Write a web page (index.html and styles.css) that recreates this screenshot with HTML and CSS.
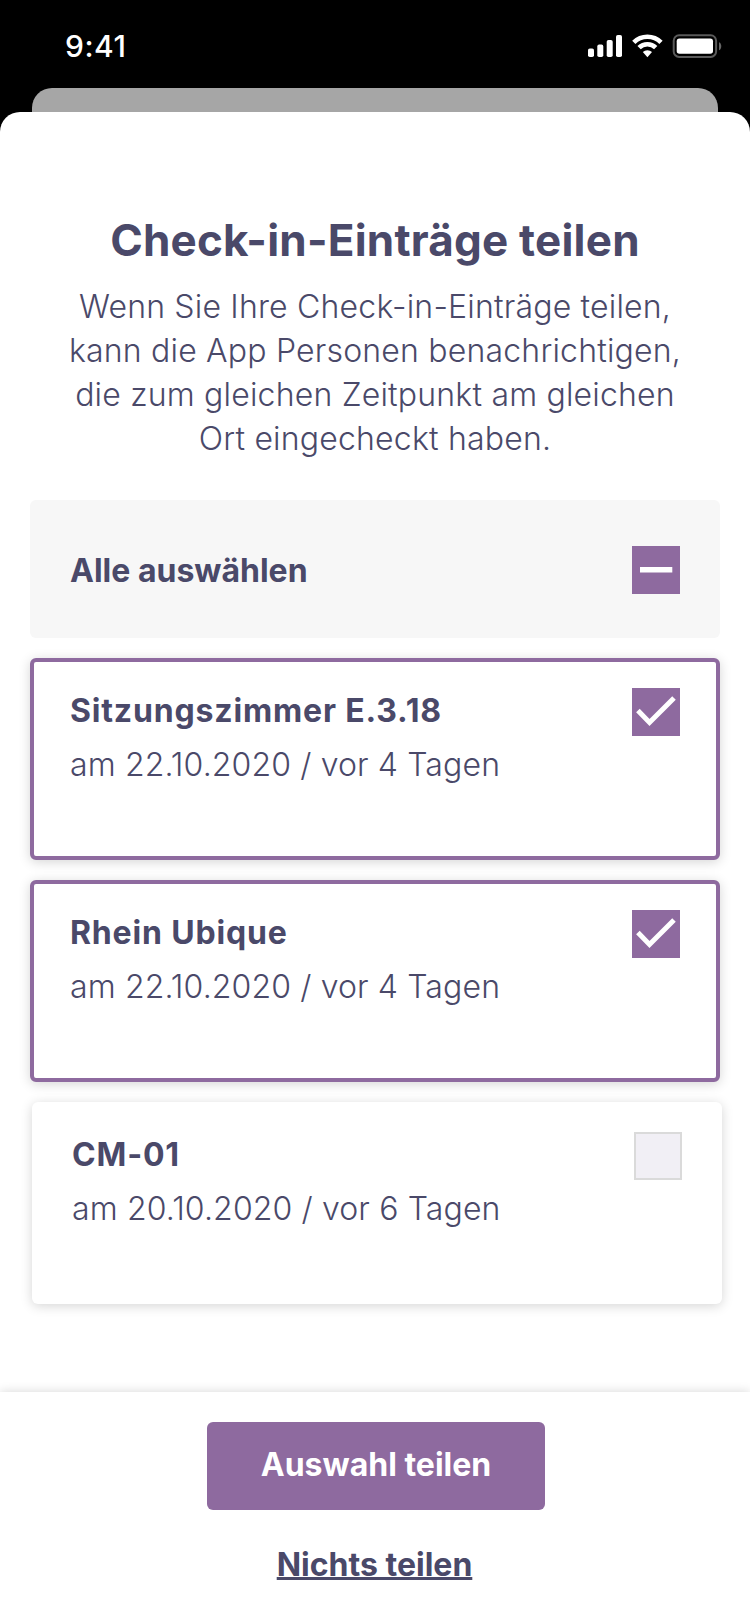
FILE: index.html
```html
<!DOCTYPE html>
<html lang="de">
<head>
<meta charset="utf-8">
<title>Check-in-Einträge teilen</title>
<link rel="stylesheet" href="styles.css">
</head>
<body>
<div class="screen">
  <header class="status">
    <span class="time">9:41</span>
    <svg class="status-icons" width="136" height="26" viewBox="0 0 136 26" fill="#fff">
      <rect x="0" y="14.5" width="6" height="8.5" rx="1.8"/>
      <rect x="9.3" y="10.6" width="6" height="12.4" rx="1.8"/>
      <rect x="18.7" y="6" width="6" height="17" rx="1.8"/>
      <rect x="28" y="1" width="6" height="22" rx="1.8"/>
      <g fill="none" stroke="#fff" stroke-width="4.6">
        <path d="M45.8 8.4a19.2 19.2 0 0 1 27.2 0"/>
        <path d="M51.1 13.7a11.7 11.7 0 0 1 16.6 0"/>
      </g>
      <path d="M54.8 18.1a6.6 6.6 0 0 1 9.2 0l-4.6 5.2z"/>
      <rect x="85.7" y="1.3" width="42.4" height="21.6" rx="5.4" fill="none" stroke="#5a5a5a" stroke-width="2"/>
      <rect x="88.7" y="4.4" width="36.3" height="15.4" rx="2.8"/>
      <path d="M131 8.2c3 1 3 7 0 8z" fill="#666"/>
    </svg>
  </header>
  <div class="sheet-behind"></div>
  <main class="sheet">
    <section class="intro">
      <h1>Check-in-Einträge teilen</h1>
      <p>Wenn Sie Ihre Check-in-Einträge teilen,<br>kann die App Personen benachrichtigen,<br>die zum gleichen Zeitpunkt am gleichen<br>Ort eingecheckt haben.</p>
    </section>
    <section class="list">
      <div class="select-all">
        <span class="label">Alle auswählen</span>
        <span class="box"><svg width="48" height="48" viewBox="0 0 48 48"><path d="M8 23.8h32.3" stroke="#fff" stroke-width="5.4"/></svg></span>
      </div>
      <article class="card selected">
        <div class="info"><h2>Sitzungszimmer E.3.18</h2><p>am 22.10.2020 / vor 4 Tagen</p></div>
        <span class="box"><svg width="48" height="48" viewBox="0 0 48 48"><path d="M5.9 22.6 17.5 34.4 42 9.9" fill="none" stroke="#fff" stroke-width="5"/></svg></span>
      </article>
      <article class="card selected">
        <div class="info"><h2>Rhein Ubique</h2><p>am 22.10.2020 / vor 4 Tagen</p></div>
        <span class="box"><svg width="48" height="48" viewBox="0 0 48 48"><path d="M5.9 22.6 17.5 34.4 42 9.9" fill="none" stroke="#fff" stroke-width="5"/></svg></span>
      </article>
      <article class="card plain">
        <div class="info"><h2>CM-01</h2><p>am 20.10.2020 / vor 6 Tagen</p></div>
        <span class="box empty"></span>
      </article>
    </section>
    <footer class="actions">
      <button class="primary">Auswahl teilen</button>
      <a class="secondary">Nichts teilen</a>
    </footer>
  </main>
</div>
</body>
</html>
```

FILE: styles.css
```css
* { box-sizing: border-box; margin: 0; padding: 0; }
body { background: #000; font-family: Inter, "Liberation Sans", sans-serif; color: #4a4969; }
.screen { width: 750px; height: 1624px; display: flex; flex-direction: column; overflow: hidden; }
.status { height: 88px; flex: none; display: flex; justify-content: space-between; align-items: flex-start; padding: 33px 26px 0 65px; color: #fff; }
.time { font-size: 30px; font-weight: 500; line-height: 26px; letter-spacing: .5px; }
.status-icons { display: block; margin-top: 1px; }
.sheet-behind { height: 24px; flex: none; margin: 0 32px; background: #a6a6a6; border-radius: 20px 20px 0 0; }
.sheet { flex: 1; display: flex; flex-direction: column; background: #fff; border-radius: 20px 20px 0 0; overflow: hidden; }
.intro { height: 388px; padding-top: 101px; text-align: center; }
h1 { font-size: 44px; line-height: 54px; font-weight: 700; letter-spacing: .22px; }
.intro p { margin-top: 18px; font-size: 32px; line-height: 44px; font-weight: 300; letter-spacing: .19px; white-space: nowrap; }
.list { flex: 1; display: flex; flex-direction: column; gap: 20px; padding: 0 30px; }
.select-all { height: 138px; display: flex; align-items: center; justify-content: space-between; padding: 2px 40px 0; background: #f7f7f7; border-radius: 6px; }
.label { padding-top: 2px; font-size: 32px; line-height: 44px; font-weight: 700; }
.card { height: 202px; display: flex; justify-content: space-between; align-items: flex-start; padding: 30px 40px; background: #fff; border-radius: 6px; box-shadow: 0 2px 12px rgba(0, 0, 0, .17); }
.card.selected { border: 4px solid #8e6a9f; padding: 26px 36px; }
.card.plain { margin: 0 -2px 0 2px; }
.info { padding-top: 1px; }
h2 { font-size: 32px; line-height: 44px; font-weight: 700; letter-spacing: .83px; }
.info p { margin-top: 10px; font-size: 32px; line-height: 44px; font-weight: 300; letter-spacing: .13px; }
.box { width: 48px; height: 48px; flex: none; background: #8e6a9f; }
.box svg { display: block; }
.box.empty { background: #f1eff5; border: 2px solid #dadada; }
.actions { height: 232px; flex: none; display: flex; flex-direction: column; align-items: center; gap: 33px; padding-top: 30px; background: #fff; box-shadow: 0 0 10px rgba(0, 0, 0, .16); }
.primary { width: 338px; height: 88px; margin-left: 2px; padding-bottom: 2px; border: 0; border-radius: 6px; background: #8e6a9f; color: #fff; font: 700 32px/44px Inter, "Liberation Sans", sans-serif; }
.secondary { margin-right: 1px; font-size: 32px; line-height: 44px; font-weight: 700; text-decoration: underline; text-decoration-thickness: 3px; text-underline-offset: 1px; text-decoration-skip-ink: none; }
```
